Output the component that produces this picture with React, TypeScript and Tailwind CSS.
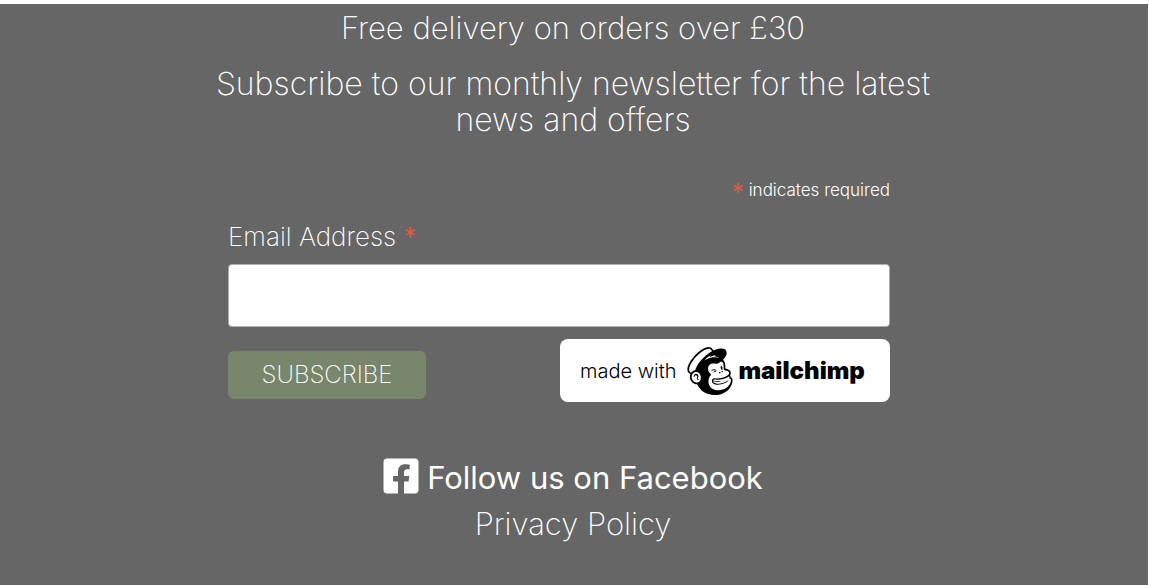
import { FaFacebookSquare } from "react-icons/fa";
import { SiMailchimp } from "react-icons/si";

function Required({ className }: { className: string }) {
  return <span className={`text-[#e85c41] ${className}`}>*</span>;
}

function MailchimpBadge() {
  return (
    <a
      href="#mailchimp"
      className="flex h-[63px] w-[330px] items-center rounded-lg bg-white pl-5 font-normal text-black"
    >
      <span className="text-xl font-light">made with</span>
      <SiMailchimp className="ml-2.5 h-12 w-12" aria-hidden="true" />
      <span className="ml-1 text-2xl font-black">mailchimp</span>
    </a>
  );
}

export default function App() {
  return (
    <div className="mt-1 mr-px min-h-[calc(100vh-4px)] bg-[#666666] font-['Inter',sans-serif] font-extralight text-white">
      <footer className="mx-auto max-w-[748px] pt-1.5">
        <div className="pr-0.5 text-center">
          <h2 className="text-[31px] leading-9">Free delivery on orders over £30</h2>
          <h2 className="mt-5 text-[32px] leading-9">
            Subscribe to our monthly newsletter for the latest news and offers
          </h2>
        </div>
        <form className="mt-10 pr-[58px] pl-7">
          <p className="text-right text-[17px] leading-6 font-light">
            <Required className="align-[-5px] text-2xl leading-none font-light" /> indicates required
          </p>
          <label htmlFor="email" className="mt-4 block text-[26px] leading-8">
            Email Address <Required className="font-light" />
          </label>
          <input
            id="email"
            type="email"
            required
            className="mt-[11px] block h-[63px] w-full rounded border border-[#abb0b2] bg-white px-4 text-2xl text-black"
          />
          <div className="mt-3 flex items-center justify-between">
            <button type="submit" className="mt-2 h-12 w-[198px] rounded-md bg-[#78866b] text-2xl">
              SUBSCRIBE
            </button>
            <MailchimpBadge />
          </div>
        </form>
        <nav className="mt-[52px] flex flex-col items-center pr-0.5 text-[31px]">
          <a href="#facebook" className="flex items-center gap-2 leading-10 font-normal">
            <FaFacebookSquare className="h-10 w-9" aria-hidden="true" />
            <span className="pt-1">Follow us on Facebook</span>
          </a>
          <a href="#privacy" className="mt-2 leading-9">Privacy Policy</a>
        </nav>
      </footer>
    </div>
  );
}
